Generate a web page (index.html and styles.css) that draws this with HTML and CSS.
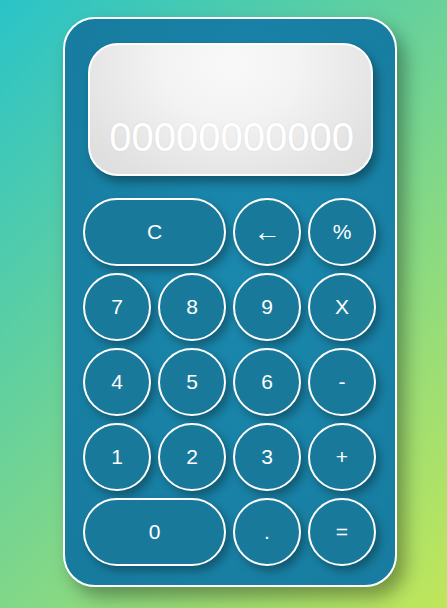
FILE: index.html
```html
<!DOCTYPE html>
<html>
<head>
<meta charset="utf-8">
<link rel="stylesheet" href="styles.css">
</head>
<body>
<div class="calc">
  <div class="display"><span class="screen">00000000000</span></div>
  <div class="keys">
    <button class="key wide">C</button>
    <button class="key arrow">←</button>
    <button class="key">%</button>
    <button class="key">7</button>
    <button class="key">8</button>
    <button class="key">9</button>
    <button class="key">X</button>
    <button class="key">4</button>
    <button class="key">5</button>
    <button class="key">6</button>
    <button class="key">-</button>
    <button class="key">1</button>
    <button class="key">2</button>
    <button class="key">3</button>
    <button class="key">+</button>
    <button class="key wide">0</button>
    <button class="key">.</button>
    <button class="key">=</button>
  </div>
</div>
</body>
</html>
```
FILE: styles.css
```css
html, body {
  margin: 0;
  height: 608px;
}
body {
  background: linear-gradient(135deg, #2ac3c8 0%, #c0e65a 100%);
  font-family: "Liberation Sans", Arial, sans-serif;
  padding: 17px 0 0 63px;
  box-sizing: border-box;
}
.calc {
  width: 334px;
  height: 570px;
  box-sizing: border-box;
  border: 2px solid #fff;
  border-radius: 32px;
  background: radial-gradient(ellipse at 55% 45%, #1a88ad 0%, #1880a4 60%, #177a9d 100%);
  padding: 24px 18px 0 18px;
  box-shadow: 8px 10px 18px rgba(0, 0, 0, 0.35);
}
.display {
  margin: 0 4px 0 5px;
  height: 133px;
  box-sizing: border-box;
  border: 2px solid #fff;
  border-radius: 30px;
  background: radial-gradient(ellipse at 50% 15%, #f9f9f9 0%, #f3f3f3 35%, #e2e2e2 80%, #dcdcdc 100%);
  box-shadow: 4px 6px 10px rgba(0, 0, 0, 0.35);
  display: flex;
  align-items: flex-end;
  justify-content: flex-end;
  padding: 0 17px 17px 0;
}
.screen {
  color: #fff;
  font-size: 40px;
  line-height: 40px;
  text-shadow: 0 0 2px rgba(0,0,0,0.08);
}
.keys {
  margin-top: 22px;
  display: grid;
  grid-template-columns: repeat(4, 68px);
  grid-auto-rows: 68px;
  gap: 7px;
}
.key {
  box-sizing: border-box;
  border: 2px solid #fff;
  border-radius: 34px;
  background: #19799b;
  color: #fff;
  font-family: "Liberation Sans", Arial, sans-serif;
  font-size: 21px;
  padding: 0;
  box-shadow: 4px 5px 8px rgba(0, 0, 0, 0.3);
}
.wide {
  grid-column: span 2;
}
.arrow {
  font-family: "Liberation Sans", sans-serif;
  font-size: 27px;
}
```
